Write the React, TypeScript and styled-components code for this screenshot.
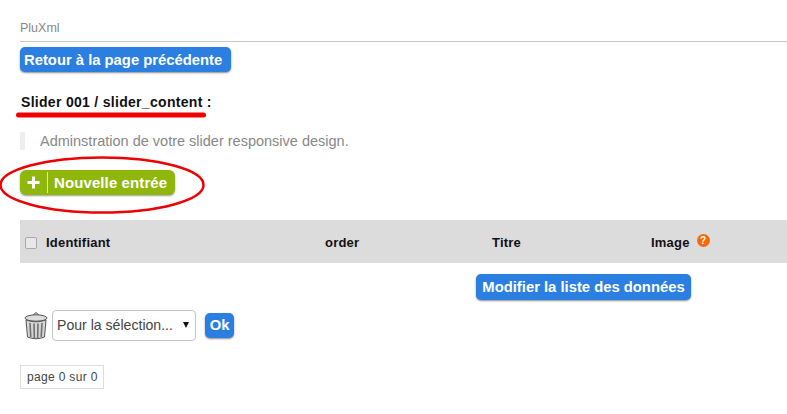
import React from "react";
import styled, { createGlobalStyle } from "styled-components";

const GlobalStyle = createGlobalStyle`
  html, body {
    margin: 0;
    padding: 0;
    background: #fff;
    font-family: "Liberation Sans", Arial, sans-serif;
  }
`;

const Page = styled.div`
  position: relative;
  width: 787px;
  height: 414px;
  overflow: hidden;
  padding: 21px 0 0 20px;
  box-sizing: border-box;
`;

const Breadcrumb = styled.div`
  height: 20px;
  border-bottom: 1px solid #c8c8c8;
  font-size: 12.5px;
  line-height: 14px;
  color: #888;
`;

const BlueButton = styled.button`
  display: block;
  height: 25px;
  padding: 0;
  border: 0;
  border-radius: 5px;
  background: #2b7fe0;
  box-shadow: 0 1px 2px rgba(0, 0, 0, 0.45);
  color: #fff;
  font: bold 14.8px/24px "Liberation Sans", Arial, sans-serif;
  white-space: nowrap;
`;

const BackButton = styled(BlueButton)`
  margin-top: 5px;
  width: 211px;
  padding-left: 4px;
  text-align: left;
`;

const Heading = styled.h2`
  margin: 23px 0 0 1px;
  font-size: 14px;
  line-height: 15px;
  font-weight: bold;
  letter-spacing: 0.3px;
  color: #111;
`;

const Description = styled.p`
  margin: 22px 0 0;
  height: 18px;
  padding-left: 15px;
  border-left: 5px solid #eee;
  font-size: 14.5px;
  line-height: 18px;
  color: #888;
`;

const GreenButton = styled.button`
  display: flex;
  align-items: center;
  margin-top: 20px;
  width: 155px;
  height: 25px;
  padding: 0;
  border: 0;
  border-radius: 6px;
  background: #8fb70b;
  box-shadow: 0 1px 2px rgba(0, 0, 0, 0.4);
  color: #fff;
  font: bold 15px/22px "Liberation Sans", Arial, sans-serif;
  letter-spacing: 0.1px;
  white-space: nowrap;
`;

const PlusSlot = styled.span`
  display: flex;
  align-items: center;
  justify-content: center;
  width: 27px;
  height: 21px;
  margin-right: 6px;
  border-right: 1px solid #dfeaa8;
`;

const HeaderRow = styled.div`
  display: grid;
  grid-template-columns: 26px 279px 167px 159px 1fr;
  align-items: center;
  box-sizing: border-box;
  margin-top: 25px;
  height: 43px;
  padding-top: 2px;
  background: #dcdcdc;
  font-size: 13px;
  font-weight: bold;
  color: #111;
`;

const HeaderCell = styled.span`
  display: flex;
  align-items: center;
  gap: 7px;
  letter-spacing: 0.2px;
`;

const CheckBox = styled.span`
  justify-self: start;
  width: 10px;
  height: 10px;
  margin: 1px 0 0 5px;
  border: 1px solid #a9a9a9;
  border-radius: 2px;
  background: #e8e8e8;
`;

const HelpBadge = styled.span`
  display: inline-flex;
  align-items: center;
  justify-content: center;
  width: 13px;
  height: 13px;
  margin-top: -5px;
  border-radius: 50%;
  background: #f26a0a;
  color: #fff;
  font-size: 10px;
  line-height: 13px;
`;

const EditRow = styled.div`
  display: flex;
  justify-content: flex-start;
  padding: 11px 0 0 456px;
`;

const EditButton = styled(BlueButton)`
  height: 26px;
  width: 215px;
`;

const ActionRow = styled.div`
  display: flex;
  align-items: center;
  margin-top: 9px;
  height: 32px;
  padding-left: 4px;
`;

const FakeSelect = styled.div`
  display: flex;
  align-items: center;
  justify-content: space-between;
  box-sizing: border-box;
  width: 144px;
  height: 31px;
  margin-left: 4px;
  padding: 0 5px 0 4px;
  border: 1px solid #c4c4c4;
  border-radius: 4px;
  background: #fff;
  font-size: 14.1px;
  color: #444;
`;

const Caret = styled.span`
  width: 0;
  height: 0;
  margin-right: 1px;
  border-left: 3px solid transparent;
  border-right: 3px solid transparent;
  border-top: 6px solid #111;
`;

const OkButton = styled(BlueButton)`
  width: 29px;
  margin-left: 9px;
`;

const Pagination = styled.div`
  display: inline-block;
  margin-top: 24px;
  height: 22px;
  padding: 0 5px 0 6px;
  border: 1px solid #ddd;
  font-size: 12px;
  line-height: 22px;
  letter-spacing: 0.33px;
  color: #444;
`;

const Annotations = styled.svg`
  position: absolute;
  top: 0;
  left: 0;
  pointer-events: none;
`;

const TrashIcon = () => (
  <svg width="24" height="29" viewBox="0 0 24 29">
    <path d="M8 5 L12 1.5 L16 5 Z" fill="#e4e4e4" stroke="#555" strokeWidth="1" />
    <ellipse cx="12" cy="7" rx="11" ry="3.2" fill="#dcdcdc" stroke="#555" strokeWidth="1" />
    <path
      d="M2 9 L3.5 26 Q12 29.5 20.5 26 L22 9 Q12 12.5 2 9 Z"
      fill="#d6d6d6"
      stroke="#555"
      strokeWidth="1"
    />
    <path
      d="M6 12 L6.8 26 M10 12.5 L10.3 27 M14 12.5 L13.7 27 M18 12 L17.2 26"
      stroke="#707070"
      strokeWidth="1.6"
      fill="none"
    />
  </svg>
);

export default function App() {
  return (
    <Page>
      <GlobalStyle />
      <Breadcrumb>PluXml</Breadcrumb>
      <BackButton>Retour à la page précédente</BackButton>
      <Heading>Slider 001 / slider_content :</Heading>
      <Description>Adminstration de votre slider responsive design.</Description>
      <GreenButton>
        <PlusSlot>
          <svg width="13" height="13" viewBox="0 0 13 13">
            <path d="M6.5 0.5 V12.5 M0.5 6.5 H12.5" stroke="#fff" strokeWidth="3" />
          </svg>
        </PlusSlot>
        Nouvelle entrée
      </GreenButton>
      <HeaderRow>
        <CheckBox />
        <HeaderCell>Identifiant</HeaderCell>
        <HeaderCell>order</HeaderCell>
        <HeaderCell>Titre</HeaderCell>
        <HeaderCell>
          Image <HelpBadge>?</HelpBadge>
        </HeaderCell>
      </HeaderRow>
      <EditRow>
        <EditButton>Modifier la liste des données</EditButton>
      </EditRow>
      <ActionRow>
        <TrashIcon />
        <FakeSelect>
          Pour la sélection...
          <Caret />
        </FakeSelect>
        <OkButton>Ok</OkButton>
      </ActionRow>
      <Pagination>page 0 sur 0</Pagination>
      <Annotations width="787" height="414" viewBox="0 0 787 414">
        <path d="M18.5 115 H203.5" stroke="#ee0000" strokeWidth="5" strokeLinecap="round" fill="none" />
        <ellipse cx="102" cy="185" rx="101.5" ry="27.5" stroke="#ee0000" strokeWidth="2.5" fill="none" />
      </Annotations>
    </Page>
  );
}
